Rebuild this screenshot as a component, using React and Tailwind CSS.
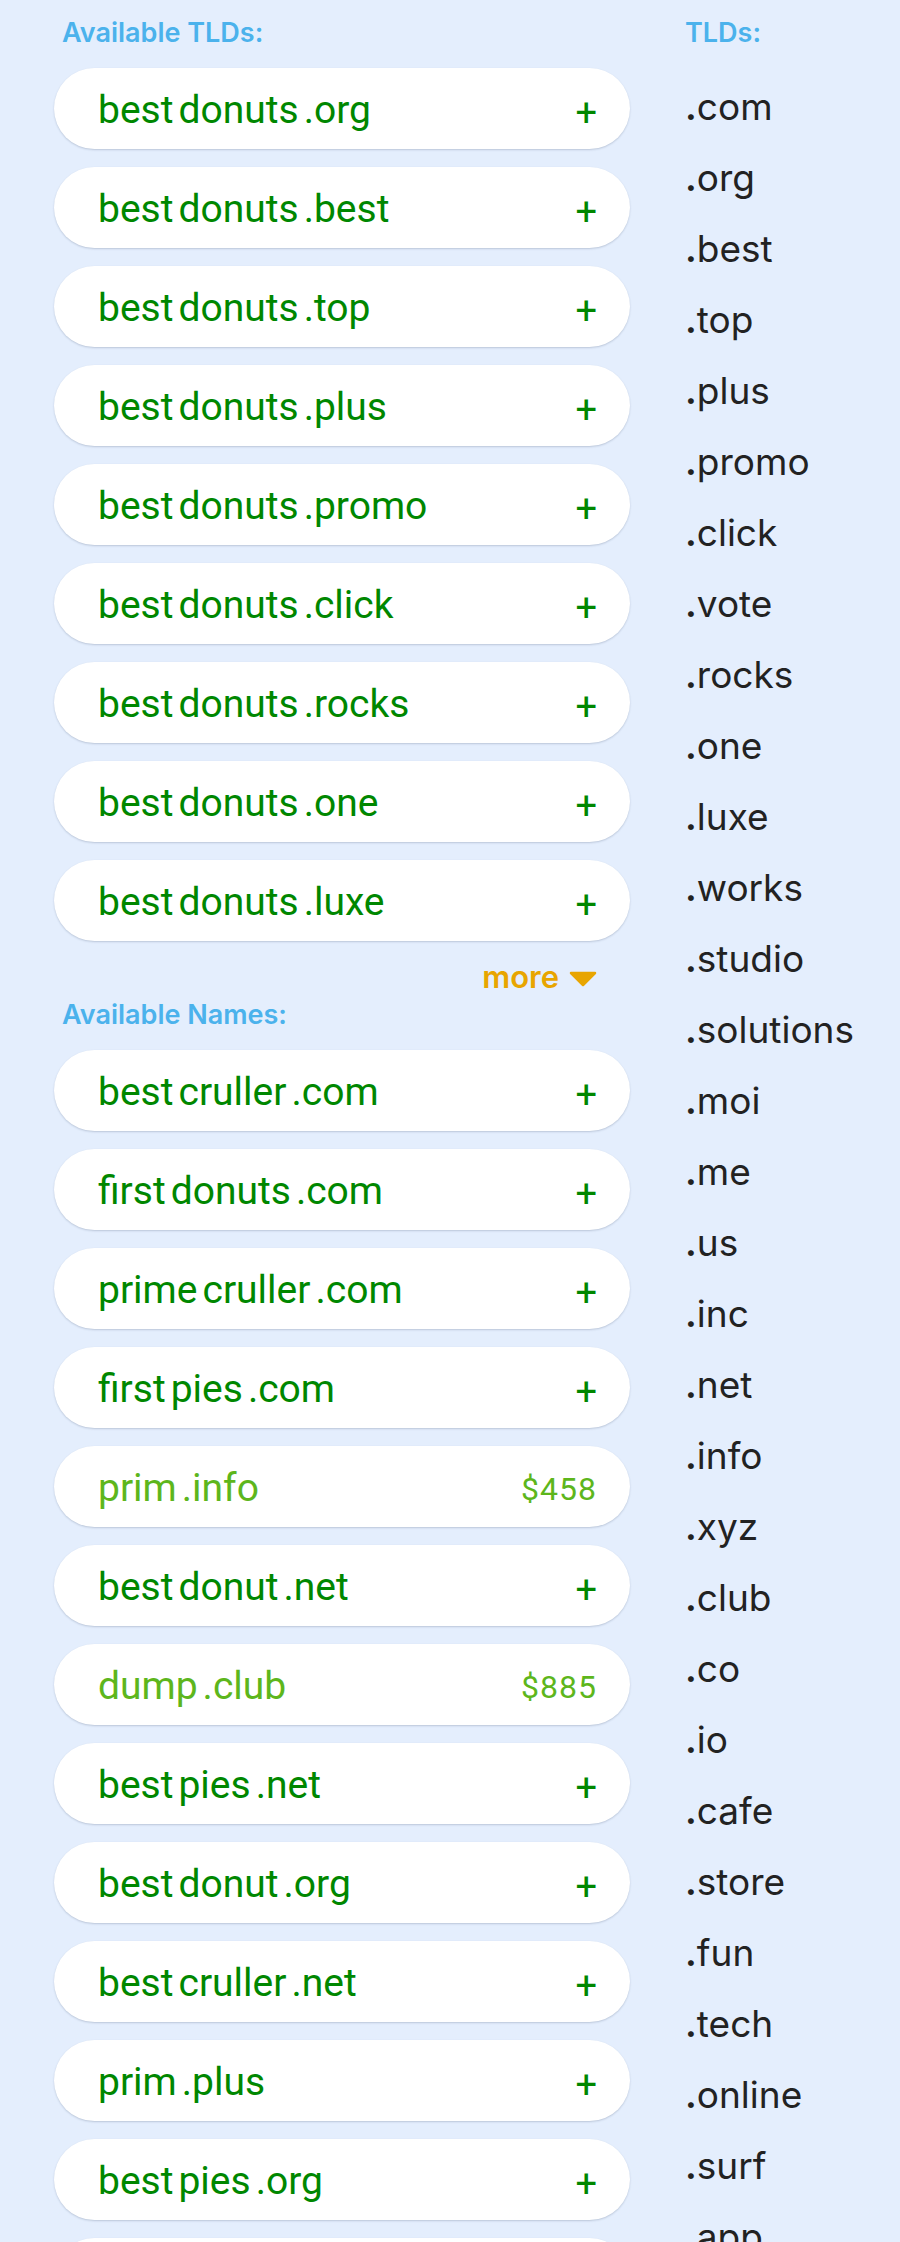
import React from "react";

const tldCards = [
  ["best", "donuts", ".org"],
  ["best", "donuts", ".best"],
  ["best", "donuts", ".top"],
  ["best", "donuts", ".plus"],
  ["best", "donuts", ".promo"],
  ["best", "donuts", ".click"],
  ["best", "donuts", ".rocks"],
  ["best", "donuts", ".one"],
  ["best", "donuts", ".luxe"],
];

const nameCards = [
  { parts: ["best", "cruller", ".com"] },
  { parts: ["first", "donuts", ".com"] },
  { parts: ["prime", "cruller", ".com"] },
  { parts: ["first", "pies", ".com"] },
  { parts: ["prim", ".info"], price: "$458" },
  { parts: ["best", "donut", ".net"] },
  { parts: ["dump", ".club"], price: "$885" },
  { parts: ["best", "pies", ".net"] },
  { parts: ["best", "donut", ".org"] },
  { parts: ["best", "cruller", ".net"] },
  { parts: ["prim", ".plus"] },
  { parts: ["best", "pies", ".org"] },
  { parts: ["first", "cruller", ".net"] },
];

const tlds = [
  "com", "org", "best", "top", "plus", "promo", "click", "vote", "rocks", "one",
  "luxe", "works", "studio", "solutions", "moi", "me", "us", "inc", "net", "info",
  "xyz", "club", "co", "io", "cafe", "store", "fun", "tech", "online", "surf",
  "app", "dev",
];

function Card({ parts, price }) {
  const priced = Boolean(price);
  return (
    <div className="flex h-[81px] items-center justify-between rounded-full bg-white pl-[44px] pr-[33px] pt-[4px] shadow-[0_1px_2px_rgba(40,60,90,0.22)]">
      <div
        className={
          priced
            ? "flex gap-[5px] text-[39px] leading-none text-[#5db61c]"
            : "flex gap-[5px] text-[39px] leading-none text-[#008700]"
        }
        style={{ fontFamily: "Roboto, 'Liberation Sans', sans-serif" }}
      >
        {parts.map((p, i) => (
          <span key={i}>{p}</span>
        ))}
      </div>
      {priced ? (
        <span
          className="text-[32px] leading-none tracking-[1px] text-[#5db61c]"
          style={{ fontFamily: "Roboto, 'Liberation Sans', sans-serif" }}
        >
          {price}
        </span>
      ) : (
        <span
          className="mt-[4px] text-[38px] leading-none text-[#008700]"
          style={{ fontFamily: "Roboto, 'Liberation Sans', sans-serif" }}
        >
          +
        </span>
      )}
    </div>
  );
}

function Label({ children, className = "" }) {
  return (
    <div
      className={
        "text-[27px] font-semibold leading-[32px] text-[#4bb2ec] " + className
      }
      style={{ fontFamily: "Inter, 'Noto Sans', sans-serif" }}
    >
      {children}
    </div>
  );
}

export default function App() {
  return (
    <div className="min-h-[2242px] w-[900px] overflow-hidden bg-[#e4eefd]">
      <div className="grid grid-cols-[576px_1fr] gap-x-[55px] pl-[54px] pt-[17px]">
        <div className="flex flex-col">
          <Label className="pl-[8px]">Available TLDs:</Label>
          <div className="mt-[19px] flex flex-col gap-[18px]">
            {tldCards.map((p, i) => (
              <Card key={i} parts={p} />
            ))}
          </div>
          <div
            className="mt-[20px] flex items-center justify-end gap-[10px] pr-[33px] text-[31px] font-semibold leading-[32px] text-[#e8a500]"
            style={{ fontFamily: "Inter, 'Noto Sans', sans-serif" }}
          >
            <span>more</span>
            <svg width="28" height="16" viewBox="0 0 28 16" className="mt-[3px]">
              <polygon
                points="2,2 26,2 14,14"
                fill="#e8a500"
                stroke="#e8a500"
                strokeWidth="2.5"
                strokeLinejoin="round"
              />
            </svg>
          </div>
          <Label className="mt-[6px] pl-[8px]">Available Names:</Label>
          <div className="mt-[19px] flex flex-col gap-[18px]">
            {nameCards.map((c, i) => (
              <Card key={i} parts={c.parts} price={c.price} />
            ))}
          </div>
        </div>
        <div className="flex flex-col">
          <Label>TLDs:</Label>
          <div
            className="mt-[22px] flex flex-col text-[37px] leading-[71px] text-[#222222]"
            style={{ fontFamily: "Inter, 'Noto Sans', sans-serif" }}
          >
            {tlds.map((t) => (
              <div key={t}>
                <span className="font-semibold">.</span>
                <span>{t}</span>
              </div>
            ))}
          </div>
        </div>
      </div>
    </div>
  );
}
